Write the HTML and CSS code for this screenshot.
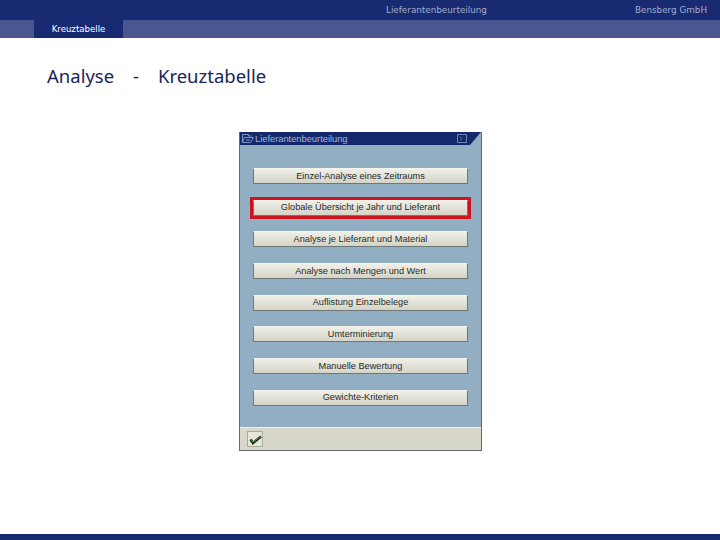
FILE: index.html
```html
<!DOCTYPE html>
<html lang="de">
  <head>
    <meta charset="UTF-8" />
    <title>Analyse - Kreuztabelle</title>
    <link rel="stylesheet" href="styles.css">
  </head>
  <body>
    <!-- Top band -->
    <header class="top-bar">
      <span class="top-title">Lieferantenbeurteilung</span>
      <span class="top-company">Bensberg GmbH</span>
    </header>
    <nav class="tab-bar">
      <span class="tab">Kreuztabelle</span>
    </nav>

    <main class="slide">
      <h1 class="slide-title">Analyse &nbsp; - &nbsp; Kreuztabelle</h1>

      <!-- Dialog screenshot -->
      <div class="dialog">
        <div class="dialog-title">
          <svg class="title-icon" width="12" height="9" viewBox="0 0 12 9">
            <path d="M.5 .5h6v1.5h3M.5 .5v8h8M2.5 3.5h9M2.5 3.5L.5 8.5M11.5 3.5L8.5 8.5M4 6h4" fill="none" stroke="#7f95c4" stroke-width="1"/>
          </svg>
          <span class="dialog-name">Lieferantenbeurteilung</span>
          <svg class="close-icon" width="10" height="9" viewBox="0 0 10 9">
            <path d="M.5.5h9v8h-9zM3 2.5l2 2-2 2M6 2.5v0M6 6.5v0" fill="none" stroke="#6f84b4" stroke-width="1"/>
          </svg>
        </div>
        <div class="dialog-body">
          <button class="sap-button">Einzel-Analyse eines Zeitraums</button>
          <button class="sap-button marked">Globale Übersicht je Jahr und Lieferant</button>
          <button class="sap-button">Analyse je Lieferant und Material</button>
          <button class="sap-button">Analyse nach Mengen und Wert</button>
          <button class="sap-button">Auflistung Einzelbelege</button>
          <button class="sap-button">Umterminierung</button>
          <button class="sap-button">Manuelle Bewertung</button>
          <button class="sap-button">Gewichte-Kriterien</button>
        </div>
        <div class="dialog-footer">
          <span class="ok-button">
            <svg width="13" height="11" viewBox="0 0 13 11">
              <path d="M1.5 5.5l2.5 3.5L12 2.5" fill="none" stroke="#123012" stroke-width="2.6"/>
              <path d="M2 5.8l2 2.4L11.5 2.6" fill="none" stroke="#4f8f3f" stroke-width="1"/>
            </svg>
          </span>
        </div>
      </div>
    </main>

    <footer class="bottom-bar"></footer>
  </body>
</html>
```

FILE: styles.css
```css
/* basic styling */
* {
  margin: 0;
  padding: 0;
  box-sizing: border-box;
}
body {
  display: flex;
  flex-direction: column;
  height: 540px;
  overflow: hidden;
  background-color: #ffffff;
  font-family: "DejaVu Sans", sans-serif;
}

/* Top band */
.top-bar {
  display: flex;
  align-items: center;
  height: 20px;
  padding: 0 13px 0 386px;
  background-color: #172a72;
  color: #a4aecf;
  font-size: 8.8px;
}
.top-company {
  margin-left: auto;
}
.tab-bar {
  height: 18px;
  padding-left: 34px;
  background-color: #4a5690;
}
.tab {
  display: block;
  width: 89px;
  height: 18px;
  background-color: #172a72;
  color: #ffffff;
  font-size: 8.6px;
  line-height: 18px;
  text-align: center;
}

/* Slide content */
.slide {
  flex: 1;
  padding: 26px 0 0 47px;
}
.slide-title {
  font-family: "Noto Sans", sans-serif;
  font-size: 18.5px;
  font-weight: normal;
  line-height: 24px;
  word-spacing: 1.5px;
  color: #1a2558;
  white-space: nowrap;
}

/* Dialog */
.dialog {
  width: 243px;
  height: 319px;
  margin: 44px 0 0 192px;
  border: 1px solid #5e6a70;
  border-top: 0;
  background-color: #92aec3;
  display: flex;
  flex-direction: column;
}
.dialog-title {
  display: flex;
  align-items: center;
  gap: 1px;
  height: 13px;
  padding: 0 14px 0 2px;
  background-color: #14286c;
  clip-path: polygon(0 0, 100% 0, calc(100% - 11px) 100%, 0 100%);
  color: #a9b6d4;
  font-family: "Liberation Sans", sans-serif;
  font-size: 9.3px;
}
.close-icon {
  margin-left: auto;
}
.dialog-body {
  flex: 1;
  display: flex;
  flex-direction: column;
  gap: 15.7px;
  padding: 23px 13px 0;
}
.sap-button {
  display: block;
  width: 215px;
  height: 16px;
  flex-shrink: 0;
  padding-bottom: 1px;
  border: 1px solid #6e7878;
  border-top-color: #f4f4ec;
  background: linear-gradient(#f0f0e8, #d4d3c6);
  color: #2a2a2a;
  font-family: "Liberation Sans", sans-serif;
  font-size: 9.2px;
  text-align: center;
}
.marked {
  outline: 3px solid #cc1420;
  outline-offset: 0;
}
.dialog-footer {
  display: flex;
  align-items: center;
  height: 23px;
  padding-left: 7px;
  border-top: 1px solid #eef0ea;
  background-color: #d8d7cb;
}
.ok-button {
  display: flex;
  align-items: center;
  justify-content: center;
  width: 16px;
  height: 16px;
  border: 1px solid #a9a99c;
  background-color: #e6e5da;
}

.bottom-bar {
  height: 6px;
  background-color: #172a72;
}
```
